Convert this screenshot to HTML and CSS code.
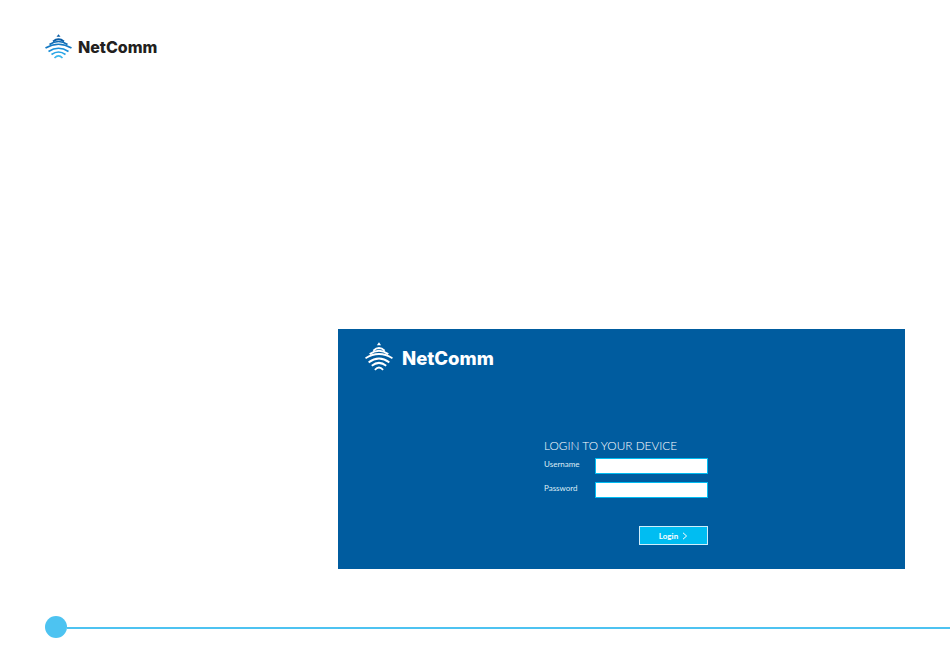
FILE: index.html
```html
<!DOCTYPE html>
<html lang="en">
<head>
<meta charset="utf-8">
<title>NetComm login</title>
<link rel="stylesheet" href="styles.css">
</head>
<body>
<header class="top">
  <div class="logo logo-dark">
    <svg class="mark" viewBox="0 0 28 25">
      <path class="tip c1" d="M13.500 .2l2 2.600h-4z"/>
      <path class="c1" d="M8 7.500Q13.500 3 19 7.500"/>
      <path class="c2" d="M4.500 10.500Q13.500 4.500 22.500 10.500"/>
      <path class="c3" d="M.5 14Q13.500 6.500 26.500 14"/>
      <path class="c4" d="M3.500 17.500Q13.500 11 23.500 17.500"/>
      <path class="c5" d="M6.500 20.500Q13.500 15.500 20.500 20.500"/>
      <path class="c6" d="M9.500 24Q13.500 20 17.500 24"/>
    </svg>
    <span class="brand">NetComm</span>
  </div>
</header>
<main class="shot">
  <div class="panel">
    <div class="logo logo-light">
      <svg class="mark" viewBox="0 0 28 25" preserveAspectRatio="none">
        <path class="tip" d="M13.500 .2l2 2.600h-4z"/>
        <path d="M8 7.500Q13.500 3 19 7.500"/>
        <path d="M4.500 10.500Q13.500 4.500 22.500 10.500"/>
        <path d="M.5 14Q13.500 6.500 26.500 14"/>
        <path d="M3.500 17.500Q13.500 11 23.500 17.500"/>
        <path d="M6.500 20.500Q13.500 15.500 20.500 20.500"/>
        <path d="M9.500 24Q13.500 20 17.500 24"/>
      </svg>
      <span class="brand">NetComm</span>
    </div>
    <form class="login">
      <h1 class="title">LOGIN TO YOUR DEVICE</h1>
      <div class="row"><label class="lbl">Username</label><span class="field"></span></div>
      <div class="row"><label class="lbl">Password</label><span class="field"></span></div>
      <div class="actions"><span class="btn">Login <svg class="chev" viewBox="0 0 6 8"><path d="M1 .8L4.600 4 1 7.200"/></svg></span></div>
    </form>
  </div>
</main>
<footer class="foot">
  <span class="dot"></span>
  <span class="rule"></span>
</footer>
</body>
</html>
```
FILE: styles.css
```css
html, body { margin: 0; padding: 0; background: #fff; }
body { width: 950px; height: 672px; overflow: hidden; font-family: "Lato", "Liberation Sans", sans-serif; }
.top { height: 329px; padding: 34px 0 0 45px; box-sizing: border-box; }
.logo { display: flex; align-items: center; }
.mark { flex: none; fill: none; stroke-linecap: butt; }
.mark path { stroke-width: 1.700; }
.mark .tip { stroke: none; }
.logo-dark { gap: 5px; height: 25px; }
.logo-dark .mark { width: 28px; height: 25px; }
.logo-dark .brand { margin-top: 1px; font-family: "Inter", "Liberation Sans", sans-serif; font-size: 16px; font-weight: 800; color: #231f20; }
.c1 { stroke: #0a5da6; }
.tip.c1 { fill: #0a5da6; }
.c2 { stroke: #0f6db6; }
.c3 { stroke: #1479c4; }
.c4 { stroke: #1a8fd8; }
.c5 { stroke: #27a4e6; }
.c6 { stroke: #3cb8ee; }
.logo-light { gap: 8px; height: 29px; }
.logo-light .mark { width: 29px; height: 29px; stroke: #fff; }
.logo-light .tip { fill: #fff; }
.logo-light .brand { margin-top: 2px; font-family: "Inter", "Liberation Sans", sans-serif; font-size: 18.500px; font-weight: 800; color: #fff; }
.shot { padding-left: 338px; }
.panel { width: 567px; height: 240px; background: #005c9f; box-sizing: border-box; padding: 13px 0 0 27px; }
.login { width: 165px; margin: 67px 0 0 179px; }
.title { margin: 0 0 5px; font-size: 11.800px; line-height: 15px; font-weight: 300; color: #fff; white-space: nowrap; }
.row { display: flex; justify-content: space-between; align-items: flex-start; margin-bottom: 8px; width: 164px; }
.lbl { font-size: 8px; line-height: 12px; font-weight: 400; color: #dcecf6; }
.field { display: block; width: 111px; height: 14px; background: #fff; border: 1px solid #00bdf2; }
.actions { display: flex; justify-content: flex-end; width: 164px; margin-top: 28px; }
.btn { display: flex; align-items: center; justify-content: center; gap: 4px; width: 67px; height: 17px; background: #00bdf2; border: 1px solid #cfeefb; font-size: 8px; font-weight: 700; color: #fff; }
.chev { width: 6px; height: 8px; fill: none; stroke: #fff; stroke-width: 1; }
.foot { display: flex; align-items: center; margin: 47px 0 0 45px; height: 22px; }
.dot { width: 22px; height: 22px; border-radius: 50%; background: #4dc3f1; flex: none; }
.rule { flex: 1; height: 2px; margin-top: 2px; background: #4dc3f1; }
```
